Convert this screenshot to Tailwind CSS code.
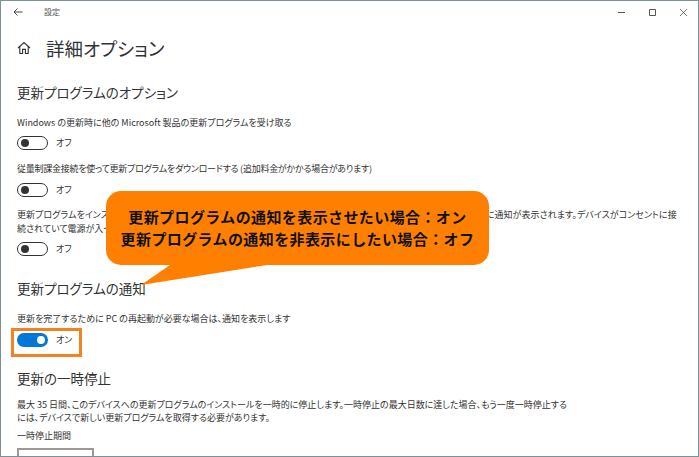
<!DOCTYPE html>
<html lang="ja">
<head>
  <meta charset="UTF-8" />
  <title>設定</title>
  <script src="https://cdn.jsdelivr.net/npm/@tailwindcss/browser@4"></script>
</head>
<body class="bg-white overflow-hidden font-['Noto_Sans_CJK_JP','Noto_Sans',sans-serif] [font-feature-settings:'palt']">
  <div class="relative w-[699px] h-[457px] overflow-hidden border border-[#7d9096] text-[#333] bg-white">

    <!-- title bar -->
    <div class="flex items-center h-[22px] pl-[12px] pr-[10px]">
      <svg class="w-[10px] h-[10px] mr-[21px]" viewBox="0 0 10 10" fill="none" stroke="#333" stroke-width="0.9"><path d="M9.5 5H1M4.5 1.5 1 5l3.5 3.5"/></svg>
      <span class="text-[8px] text-[#555]">設定</span>
      <div class="ml-auto flex items-center gap-[22px]">
        <svg class="w-[9px] h-[9px]" viewBox="0 0 9 9" stroke="#555" fill="none"><path d="M1 4.5h7"/></svg>
        <svg class="w-[9px] h-[9px]" viewBox="0 0 9 9" stroke="#555" fill="none"><path d="M1.5 1.5h6v6h-6z"/></svg>
        <svg class="w-[9px] h-[9px]" viewBox="0 0 9 9" stroke="#555" fill="none" stroke-width="0.8"><path d="M1 1l7 7M8 1 1 8"/></svg>
      </div>
    </div>

    <!-- page content -->
    <main class="pl-[16px]">
      <div class="flex items-center h-[28px] mt-[11px]">
        <svg class="w-[14px] h-[14px] mr-[15px]" viewBox="0 0 14 14" fill="none" stroke="#333" stroke-width="1.1"><path d="M1 7 7 1.5 13 7M2.8 5.6V12.5H5.6V8.4H8.4V12.5H11.2V5.6"/></svg>
        <h1 class="text-[18.5px] leading-none font-normal">詳細オプション</h1>
      </div>

      <h2 class="text-[13.5px] leading-[18px] font-normal mt-[21px]">更新プログラムのオプション</h2>
      <p class="text-[9px] leading-[14px] mt-[15px]">Windows の更新時に他の Microsoft 製品の更新プログラムを受け取る</p>
      <div class="flex items-center mt-[5px] h-[15px]">
        <span class="flex items-center w-[31px] h-[14px] rounded-full border-[1.5px] border-[#333] pl-[3px]"><span class="w-[8px] h-[8px] rounded-full bg-[#333]"></span></span>
        <span class="text-[9px] ml-[8px]">オフ</span>
      </div>

      <p class="text-[9px] leading-[14px] mt-[12px] tracking-[-0.25px]">従量制課金接続を使って更新プログラムをダウンロードする (追加料金がかかる場合があります)</p>
      <div class="flex items-center mt-[6px] h-[15px]">
        <span class="flex items-center w-[31px] h-[14px] rounded-full border-[1.5px] border-[#333] pl-[3px]"><span class="w-[8px] h-[8px] rounded-full bg-[#333]"></span></span>
        <span class="text-[9px] ml-[8px]">オフ</span>
      </div>

      <p class="text-[9px] leading-[14px] mt-[11px] whitespace-nowrap tracking-[0.05px]">更新プログラムをインストールするために再起動が必要な場合は、できるだけ早くこのデバイスを再起動します。再起動の前に通知が表示されます。デバイスがコンセントに接</p>
      <p class="text-[9px] leading-[14px] whitespace-nowrap">続されていて電源が入っている必要があります。</p>
      <div class="flex items-center mt-[5px] h-[15px]">
        <span class="flex items-center w-[31px] h-[14px] rounded-full border-[1.5px] border-[#333] pl-[3px]"><span class="w-[8px] h-[8px] rounded-full bg-[#333]"></span></span>
        <span class="text-[9px] ml-[8px]">オフ</span>
      </div>

      <h2 class="text-[13.5px] leading-[18px] font-normal mt-[23px]">更新プログラムの通知</h2>
      <p class="text-[9px] leading-[14px] mt-[15px]">更新を完了するために PC の再起動が必要な場合は、通知を表示します</p>
      <div class="flex items-center mt-[6px] h-[15px]">
        <span class="flex items-center justify-end w-[31px] h-[14px] rounded-full bg-[#0078d7] pr-[3px]"><span class="w-[8px] h-[8px] rounded-full bg-white"></span></span>
        <span class="text-[9px] ml-[8px]">オン</span>
      </div>

      <h2 class="text-[13.5px] leading-[18px] font-normal mt-[22px]">更新の一時停止</h2>
      <p class="text-[9px] leading-[13px] mt-[11px] whitespace-nowrap">最大 35 日間、このデバイスへの更新プログラムのインストールを一時的に停止します。一時停止の最大日数に達した場合、もう一度一時停止する</p>
      <p class="text-[9px] leading-[13px] whitespace-nowrap">には、デバイスで新しい更新プログラムを取得する必要があります。</p>
      <p class="text-[9px] leading-[14px] mt-[5px]">一時停止期間</p>
      <div class="w-[77px] h-[20px] border-2 border-[#999] mt-[5px]"></div>
    </main>

    <!-- orange highlight round the toggle -->
    <div class="absolute left-[10px] top-[327px] w-[71px] h-[29px] border-[3px] border-[#f58220]"></div>

    <!-- callout -->
    <svg class="absolute left-[130px] top-[255px] w-[150px] h-[32px]" viewBox="0 0 150 32"><path d="M52 0 10 29 136 9V0z" fill="#ff8000"/></svg>
    <div class="absolute left-[105px] top-[190px] w-[383px] h-[74px] rounded-[15px] bg-[#ff8000] flex flex-col items-center justify-center text-[#111] font-bold text-[15px] leading-[22px] tracking-[0.4px] [font-feature-settings:normal]">
      <p>更新プログラムの通知を表示させたい場合：オン</p>
      <p>更新プログラムの通知を非表示にしたい場合：オフ</p>
    </div>
  </div>
</body>
</html>
